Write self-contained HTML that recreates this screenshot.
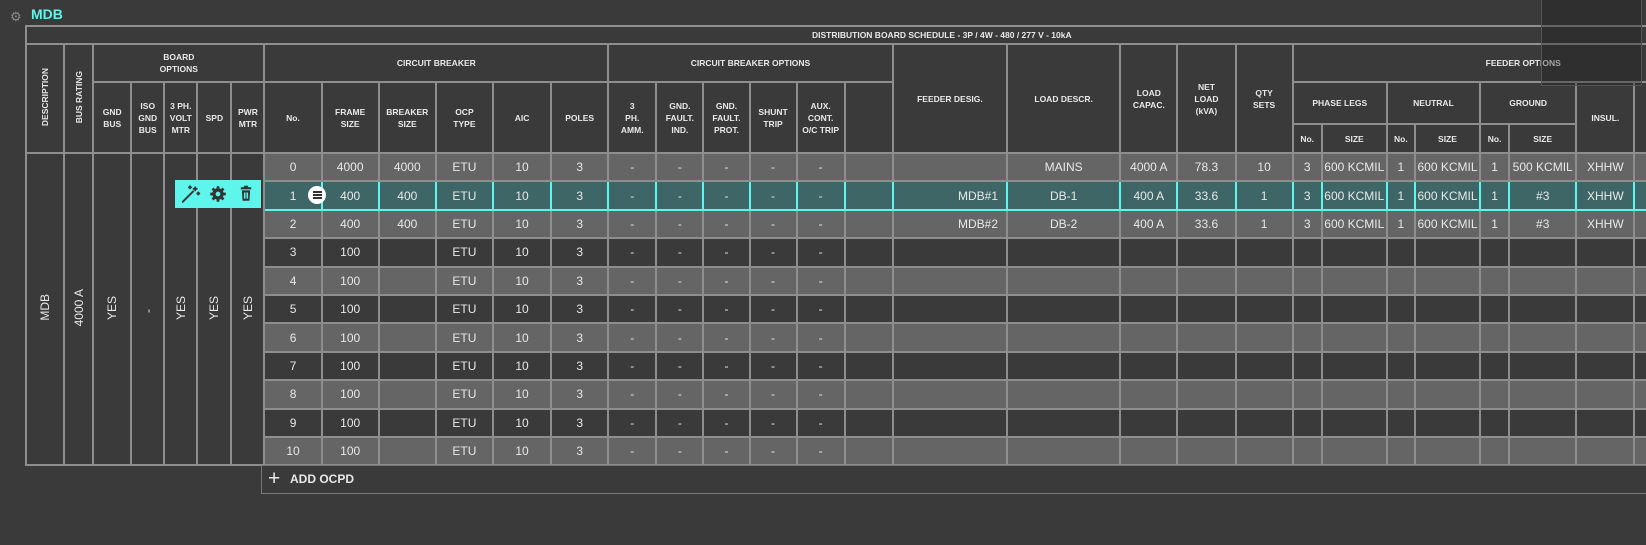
<!DOCTYPE html>
<html><head><style>
html,body{margin:0;padding:0;background:#3a3a3a;width:1646px;height:545px;overflow:hidden;font-family:"Liberation Sans",sans-serif;}
.title{position:absolute;left:31px;top:6px;color:#5ef5ec;font-weight:bold;font-size:14px;}
.gear{position:absolute;left:10px;top:9px;color:#8a8a8a;font-size:13px;}
table{position:absolute;left:25px;top:25px;border-collapse:collapse;table-layout:fixed;width:1711px;}
td{border:2px solid #8e8e8e;color:#e8e8e8;text-align:center;font-size:12px;padding:0;overflow:hidden;white-space:nowrap;}
.h td,td.h{font-size:8.5px;font-weight:bold;line-height:12px;white-space:normal;}
.rot{writing-mode:vertical-rl;transform:rotate(180deg);display:inline-block;}
tr.d{height:28.4px;}
tr.g td.v{background:#656565;}
tr.k td.v{background:#3a3a3a;}
tr.t td.v{background:#3f6666;border-color:#5ef5ec;}
.r{text-align:right;padding-right:8px;}
.tb{position:absolute;left:175px;top:180px;width:86px;height:28px;background:#5ef5ec;}
.ov{position:absolute;left:1541px;top:-1px;width:99px;height:85px;background:rgba(30,30,30,0.35);border:1px solid #555;}
.add{position:absolute;left:261px;top:465px;width:1400px;height:27px;border:1px solid #777;border-right:none;color:#e8e8e8;font-weight:bold;font-size:12px;line-height:27px;}
.hb{position:absolute;left:308px;top:186px;width:18px;height:18px;border-radius:50%;background:#fff;}
.hb i{position:absolute;left:4.5px;width:9px;height:2px;background:#333;}
</style></head><body>
<div class="gear">⚙</div><div class="title">MDB</div>
<table>
<colgroup><col style="width:38px"><col style="width:29px"><col style="width:38px"><col style="width:33px"><col style="width:33px"><col style="width:34px"><col style="width:33px"><col style="width:57px"><col style="width:57px"><col style="width:57px"><col style="width:57px"><col style="width:58px"><col style="width:57px"><col style="width:48px"><col style="width:47px"><col style="width:46px"><col style="width:47px"><col style="width:48px"><col style="width:48px"><col style="width:114px"><col style="width:113px"><col style="width:57px"><col style="width:58px"><col style="width:57px"><col style="width:29px"><col style="width:65px"><col style="width:28px"><col style="width:65px"><col style="width:29px"><col style="width:67px"><col style="width:58px"><col style="width:100px"></colgroup>
<tr class="h" style="height:18px"><td colspan="32" style="padding-left:785px;text-align:left">DISTRIBUTION BOARD SCHEDULE - 3P / 4W - 480 / 277 V - 10kA</td></tr>
<tr class="h" style="height:38px"><td rowspan="3"><span class="rot">DESCRIPTION</span></td><td rowspan="3"><span class="rot">BUS RATING</span></td><td colspan="5">BOARD<br>OPTIONS</td><td colspan="6">CIRCUIT BREAKER</td><td colspan="6">CIRCUIT BREAKER OPTIONS</td><td rowspan="3">FEEDER DESIG.</td><td rowspan="3">LOAD DESCR.</td><td rowspan="3">LOAD<br>CAPAC.</td><td rowspan="3">NET<br>LOAD<br>(kVA)</td><td rowspan="3">QTY<br>SETS</td><td colspan="8" style="text-align:left;padding-left:192px">FEEDER OPTIONS</td></tr>
<tr class="h" style="height:42px"><td rowspan="2">GND<br>BUS</td><td rowspan="2">ISO<br>GND<br>BUS</td><td rowspan="2">3 PH.<br>VOLT<br>MTR</td><td rowspan="2">SPD</td><td rowspan="2">PWR<br>MTR</td><td rowspan="2">No.</td><td rowspan="2">FRAME<br>SIZE</td><td rowspan="2">BREAKER<br>SIZE</td><td rowspan="2">OCP<br>TYPE</td><td rowspan="2">AIC</td><td rowspan="2">POLES</td><td rowspan="2">3<br>PH.<br>AMM.</td><td rowspan="2">GND.<br>FAULT.<br>IND.</td><td rowspan="2">GND.<br>FAULT.<br>PROT.</td><td rowspan="2">SHUNT<br>TRIP</td><td rowspan="2">AUX.<br>CONT.<br>O/C TRIP</td><td rowspan="2"></td><td colspan="2">PHASE LEGS</td><td colspan="2">NEUTRAL</td><td colspan="2">GROUND</td><td rowspan="2">INSUL.</td><td rowspan="2"></td></tr>
<tr class="h" style="height:29px"><td>No.</td><td>SIZE</td><td>No.</td><td>SIZE</td><td>No.</td><td>SIZE</td></tr>
<tr class="d g"><td rowspan="11"><span class="rot">MDB</span></td><td rowspan="11"><span class="rot">4000 A</span></td><td rowspan="11"><span class="rot">YES</span></td><td rowspan="11"><span class="rot">-</span></td><td rowspan="11"><span class="rot">YES</span></td><td rowspan="11"><span class="rot">YES</span></td><td rowspan="11"><span class="rot">YES</span></td><td class="v">0</td><td class="v">4000</td><td class="v">4000</td><td class="v">ETU</td><td class="v">10</td><td class="v">3</td><td class="v">-</td><td class="v">-</td><td class="v">-</td><td class="v">-</td><td class="v">-</td><td class="v"></td><td class="v"></td><td class="v">MAINS</td><td class="v">4000 A</td><td class="v">78.3</td><td class="v">10</td><td class="v">3</td><td class="v">600 KCMIL</td><td class="v">1</td><td class="v">600 KCMIL</td><td class="v">1</td><td class="v">500 KCMIL</td><td class="v">XHHW</td><td class="v"></td></tr>
<tr class="d t"><td class="v">1</td><td class="v">400</td><td class="v">400</td><td class="v">ETU</td><td class="v">10</td><td class="v">3</td><td class="v">-</td><td class="v">-</td><td class="v">-</td><td class="v">-</td><td class="v">-</td><td class="v"></td><td class="v r">MDB#1</td><td class="v">DB-1</td><td class="v">400 A</td><td class="v">33.6</td><td class="v">1</td><td class="v">3</td><td class="v">600 KCMIL</td><td class="v">1</td><td class="v">600 KCMIL</td><td class="v">1</td><td class="v">#3</td><td class="v">XHHW</td><td class="v"></td></tr>
<tr class="d g"><td class="v">2</td><td class="v">400</td><td class="v">400</td><td class="v">ETU</td><td class="v">10</td><td class="v">3</td><td class="v">-</td><td class="v">-</td><td class="v">-</td><td class="v">-</td><td class="v">-</td><td class="v"></td><td class="v r">MDB#2</td><td class="v">DB-2</td><td class="v">400 A</td><td class="v">33.6</td><td class="v">1</td><td class="v">3</td><td class="v">600 KCMIL</td><td class="v">1</td><td class="v">600 KCMIL</td><td class="v">1</td><td class="v">#3</td><td class="v">XHHW</td><td class="v"></td></tr>
<tr class="d k"><td class="v">3</td><td class="v">100</td><td class="v"></td><td class="v">ETU</td><td class="v">10</td><td class="v">3</td><td class="v">-</td><td class="v">-</td><td class="v">-</td><td class="v">-</td><td class="v">-</td><td class="v"></td><td class="v"></td><td class="v"></td><td class="v"></td><td class="v"></td><td class="v"></td><td class="v"></td><td class="v"></td><td class="v"></td><td class="v"></td><td class="v"></td><td class="v"></td><td class="v"></td><td class="v"></td></tr>
<tr class="d g"><td class="v">4</td><td class="v">100</td><td class="v"></td><td class="v">ETU</td><td class="v">10</td><td class="v">3</td><td class="v">-</td><td class="v">-</td><td class="v">-</td><td class="v">-</td><td class="v">-</td><td class="v"></td><td class="v"></td><td class="v"></td><td class="v"></td><td class="v"></td><td class="v"></td><td class="v"></td><td class="v"></td><td class="v"></td><td class="v"></td><td class="v"></td><td class="v"></td><td class="v"></td><td class="v"></td></tr>
<tr class="d k"><td class="v">5</td><td class="v">100</td><td class="v"></td><td class="v">ETU</td><td class="v">10</td><td class="v">3</td><td class="v">-</td><td class="v">-</td><td class="v">-</td><td class="v">-</td><td class="v">-</td><td class="v"></td><td class="v"></td><td class="v"></td><td class="v"></td><td class="v"></td><td class="v"></td><td class="v"></td><td class="v"></td><td class="v"></td><td class="v"></td><td class="v"></td><td class="v"></td><td class="v"></td><td class="v"></td></tr>
<tr class="d g"><td class="v">6</td><td class="v">100</td><td class="v"></td><td class="v">ETU</td><td class="v">10</td><td class="v">3</td><td class="v">-</td><td class="v">-</td><td class="v">-</td><td class="v">-</td><td class="v">-</td><td class="v"></td><td class="v"></td><td class="v"></td><td class="v"></td><td class="v"></td><td class="v"></td><td class="v"></td><td class="v"></td><td class="v"></td><td class="v"></td><td class="v"></td><td class="v"></td><td class="v"></td><td class="v"></td></tr>
<tr class="d k"><td class="v">7</td><td class="v">100</td><td class="v"></td><td class="v">ETU</td><td class="v">10</td><td class="v">3</td><td class="v">-</td><td class="v">-</td><td class="v">-</td><td class="v">-</td><td class="v">-</td><td class="v"></td><td class="v"></td><td class="v"></td><td class="v"></td><td class="v"></td><td class="v"></td><td class="v"></td><td class="v"></td><td class="v"></td><td class="v"></td><td class="v"></td><td class="v"></td><td class="v"></td><td class="v"></td></tr>
<tr class="d g"><td class="v">8</td><td class="v">100</td><td class="v"></td><td class="v">ETU</td><td class="v">10</td><td class="v">3</td><td class="v">-</td><td class="v">-</td><td class="v">-</td><td class="v">-</td><td class="v">-</td><td class="v"></td><td class="v"></td><td class="v"></td><td class="v"></td><td class="v"></td><td class="v"></td><td class="v"></td><td class="v"></td><td class="v"></td><td class="v"></td><td class="v"></td><td class="v"></td><td class="v"></td><td class="v"></td></tr>
<tr class="d k"><td class="v">9</td><td class="v">100</td><td class="v"></td><td class="v">ETU</td><td class="v">10</td><td class="v">3</td><td class="v">-</td><td class="v">-</td><td class="v">-</td><td class="v">-</td><td class="v">-</td><td class="v"></td><td class="v"></td><td class="v"></td><td class="v"></td><td class="v"></td><td class="v"></td><td class="v"></td><td class="v"></td><td class="v"></td><td class="v"></td><td class="v"></td><td class="v"></td><td class="v"></td><td class="v"></td></tr>
<tr class="d g"><td class="v">10</td><td class="v">100</td><td class="v"></td><td class="v">ETU</td><td class="v">10</td><td class="v">3</td><td class="v">-</td><td class="v">-</td><td class="v">-</td><td class="v">-</td><td class="v">-</td><td class="v"></td><td class="v"></td><td class="v"></td><td class="v"></td><td class="v"></td><td class="v"></td><td class="v"></td><td class="v"></td><td class="v"></td><td class="v"></td><td class="v"></td><td class="v"></td><td class="v"></td><td class="v"></td></tr>
</table>
<div class="tb">
<svg width="86" height="28" viewBox="0 0 82 27">
<g stroke="#333" stroke-width="1.8" fill="none" stroke-linecap="round">
<path d="M7 21 L17 11"/><path d="M19 7 v3 M17.5 8.5 h3 M22 12 v2 M21 13 h2 M14 6 v2 M13 7 h2"/>
</g>
<g transform="translate(41,13.5)" fill="#333">
<circle r="5.5"/><g stroke="#333" stroke-width="2.6"><path d="M0 -7.5V7.5M-7.5 0H7.5M-5.3 -5.3L5.3 5.3M-5.3 5.3L5.3 -5.3"/></g>
<circle r="2.3" fill="#5ef5ec"/></g>
<g fill="#333"><rect x="63" y="7" width="10" height="2"/><rect x="66" y="5.5" width="4" height="2"/><path d="M64 10h8l-0.7 10h-6.6z"/></g>
<g stroke="#5ef5ec" stroke-width="1"><path d="M66.5 12v6M68 12v6M69.5 12v6"/></g>
</svg></div>
<div class="hb"><i style="top:5px"></i><i style="top:8px"></i><i style="top:11px"></i></div>
<div class="ov"></div>
<div class="add"><span style="font-size:21px;font-weight:normal;position:absolute;left:6px;top:-1px">+</span><span style="position:absolute;left:28px">ADD OCPD</span></div>
</body></html>
